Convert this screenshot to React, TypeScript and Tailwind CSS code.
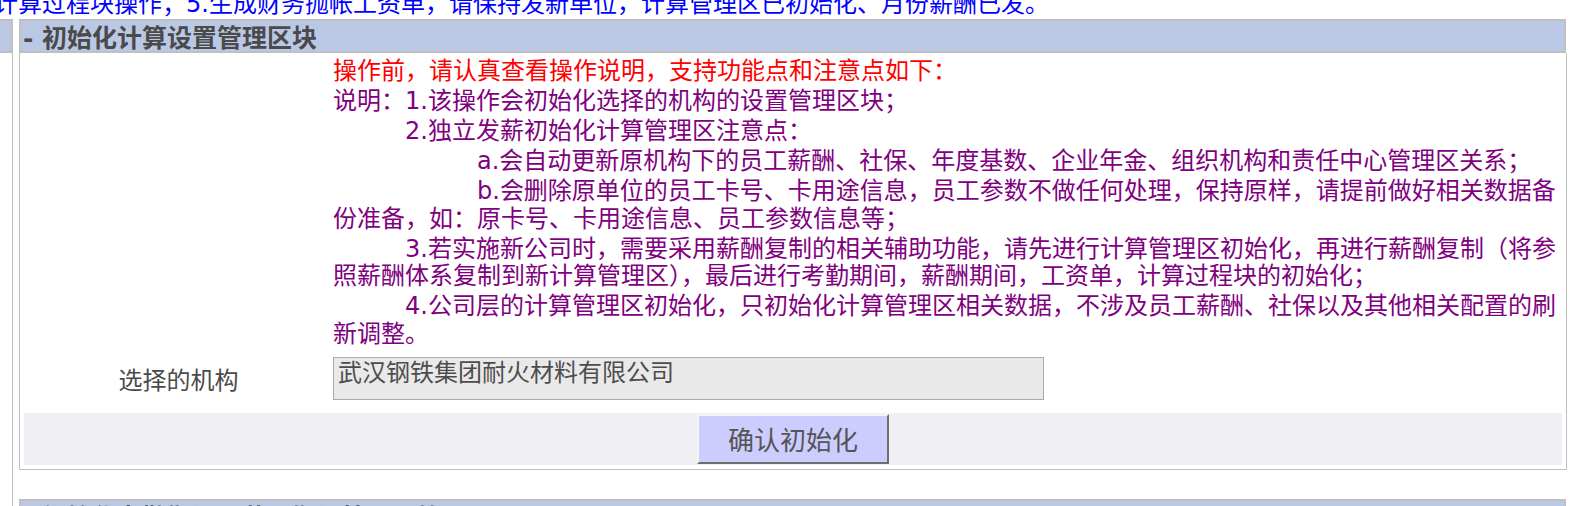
import React from "react";

function Lt({ children }: { children: React.ReactNode }) {
  return <span className="font-['DejaVu_Sans',sans-serif] leading-[20px]">{children}</span>;
}

export default function App() {
  return (
    <div className="w-[1580px] h-[506px] overflow-hidden bg-white font-['Noto_Sans_CJK_SC',sans-serif] flex flex-col">
      <div className="h-[19px] shrink-0 overflow-hidden">
        <p className="-mt-[11.6px] -ml-[6px] whitespace-nowrap text-[24px] leading-[27.5px] text-[#0000ff]">
          计算过程块操作；<Lt>5.</Lt>生成财务抛帐工资单，请保持发新单位，计算管理区已初始化、月份薪酬已发。
        </p>
      </div>
      <div className="flex flex-1 gap-[6px]">
        <div className="w-[13px] flex flex-col shrink-0">
          <div className="h-[34px] bg-[#bac8e6] border-t-2 border-b-2 border-r-2 border-[#c0c0c0]" />
          <div className="flex-1 border-r border-[#c0c0c0]" />
        </div>
        <div className="w-[1548px] flex flex-col shrink-0">
          <div className="w-[1547px] h-[34px] bg-[#bac8e6] border-2 border-[#c0c0c0] flex items-center pl-[2px]">
            <span className="text-[25px] font-bold text-[#4a4a4a] leading-[30px] whitespace-nowrap">
              <span className="font-['DejaVu_Sans',sans-serif] leading-[20px]">-&nbsp;</span>初始化计算设置管理区块
            </span>
          </div>
          <div className="border-x border-b border-[#c0c0c0] pt-[2px] px-[4px] pb-[4px] flex flex-col">
            <div className="flex">
              <div className="w-[309px] shrink-0" />
              <div className="flex-1 flex flex-col gap-[2.5px] text-[24px] leading-[27.5px] text-[#800080]">
                <p className="text-[#ff0000]">操作前，请认真查看操作说明，支持功能点和注意点如下：</p>
                <p>说明：<Lt>1.</Lt>该操作会初始化选择的机构的设置管理区块；</p>
                <p className="indent-[72px]"><Lt>2.</Lt>独立发薪初始化计算管理区注意点：</p>
                <p className="indent-[144px]"><Lt>a.</Lt>会自动更新原机构下的员工薪酬、社保、年度基数、企业年金、组织机构和责任中心管理区关系；</p>
                <p className="indent-[144px]"><Lt>b.</Lt>会删除原单位的员工卡号、卡用途信息，员工参数不做任何处理，保持原样，请提前做好相关数据备份准备，如：原卡号、卡用途信息、员工参数信息等；</p>
                <p className="indent-[72px]"><Lt>3.</Lt>若实施新公司时，需要采用薪酬复制的相关辅助功能，请先进行计算管理区初始化，再进行薪酬复制（将参照薪酬体系复制到新计算管理区），最后进行考勤期间，薪酬期间，工资单，计算过程块的初始化；</p>
                <p className="indent-[72px]"><Lt>4.</Lt>公司层的计算管理区初始化，只初始化计算管理区相关数据，不涉及员工薪酬、社保以及其他相关配置的刷新调整。</p>
              </div>
            </div>
            <div className="flex items-center pt-[12px] pb-[13px]">
              <div className="w-[309px] shrink-0 text-center text-[24px] leading-[28px] text-[#4a4a4a]">选择的机构</div>
              <div className="w-[711px] h-[43px] border border-[#ababab] bg-[#e9e9e9] pt-[1px] pl-[4px] text-[24px] leading-[24px] text-[#4d4d4d] whitespace-nowrap overflow-hidden">
                武汉钢铁集团耐火材料有限公司
              </div>
            </div>
            <div className="h-[52px] bg-[#efeff4] flex items-center justify-center">
              <button className="w-[192px] h-[50px] bg-[#ccccff] border-2 border-t-[#f4f4f4] border-l-[#f4f4f4] border-r-[#6e6e6e] border-b-[#6e6e6e] text-[26px] leading-[30px] text-[#555555] flex items-center justify-center">
                确认初始化
              </button>
            </div>
          </div>
          <div className="mt-[29px] w-[1547px] h-[34px] shrink-0 bg-[#bac8e6] border-2 border-[#c0c0c0] flex items-center pl-[2px]">
            <span className="text-[25px] font-bold text-[#4a4a4a] leading-[30px] whitespace-nowrap">
              <span className="font-['DejaVu_Sans',sans-serif] leading-[20px]">-&nbsp;</span>初始化考勤期间及薪酬期间管理区块
            </span>
          </div>
        </div>
      </div>
    </div>
  );
}
